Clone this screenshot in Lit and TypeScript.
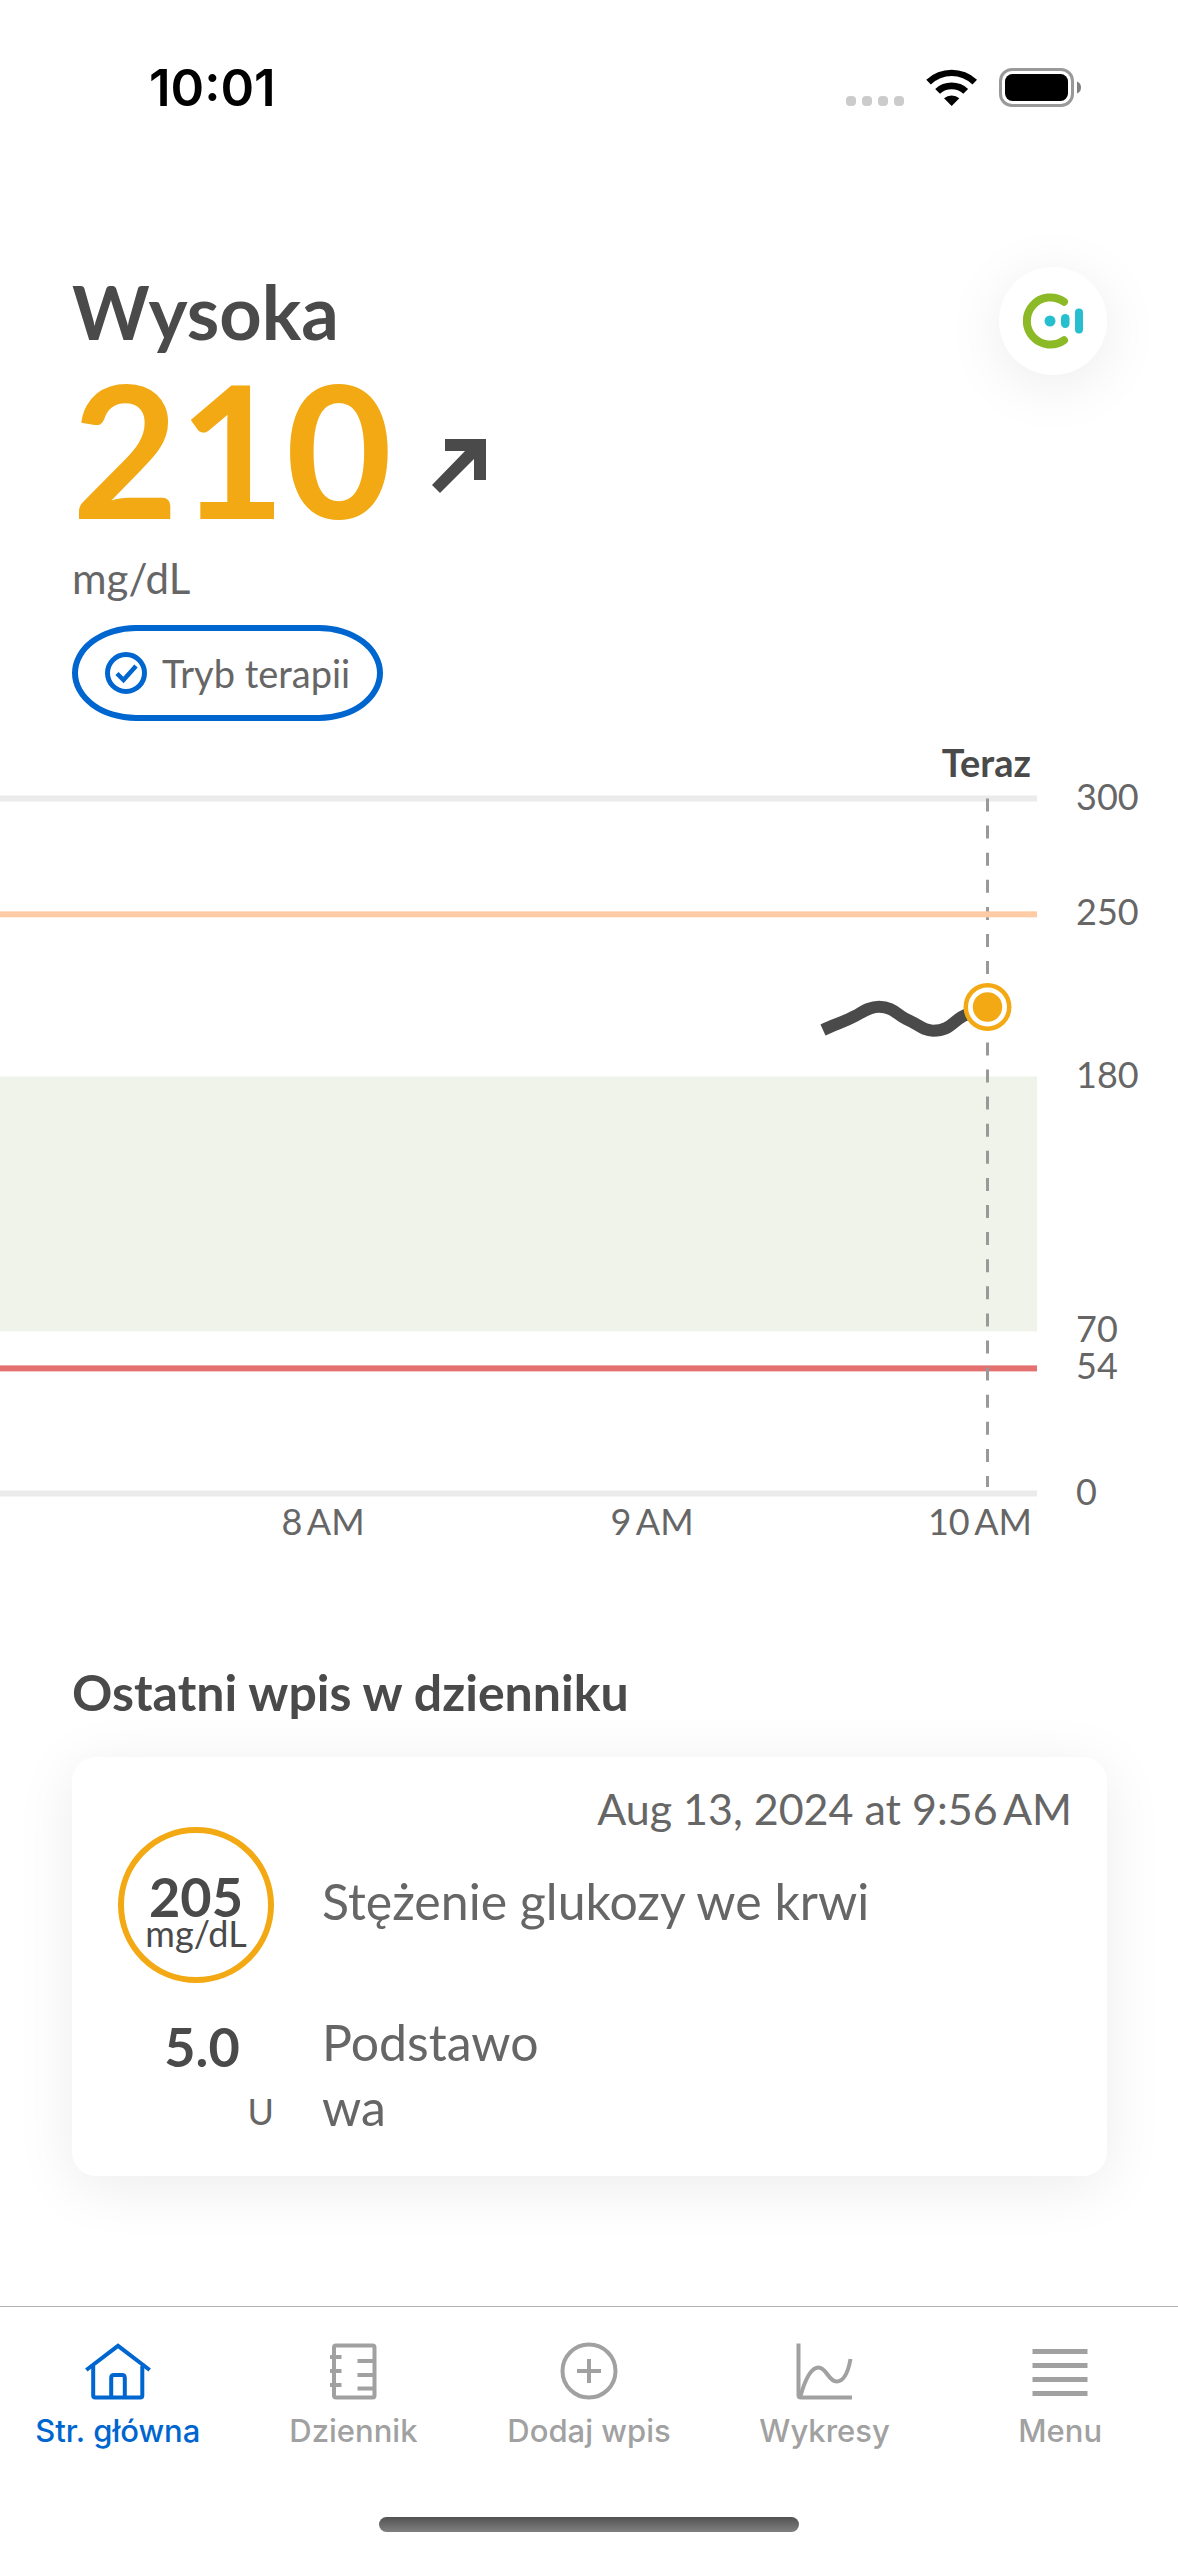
import { LitElement, html, css, svg } from "lit";
import { customElement, property } from "lit/decorators.js";
import { classMap } from "lit/directives/class-map.js";

const tabs = [
  {
    label: "Str. główna",
    active: true,
    icon: svg`<path d="M.3 27 32 2.800 63.700 27" stroke-linejoin="miter"/><path d="M7.200 23V52.500Q7.200 54.500 9.200 54.500H54.300Q56.300 54.500 56.300 52.500V23"/><path d="M25.200 54.500V35Q25.200 32 28 32H36Q38.800 32 38.800 35V54.500"/>`,
  },
  {
    label: "Dziennik",
    active: false,
    icon: svg`<rect x="13" y="2.500" width="40.500" height="52" rx="2"/><path d="M9 14H20.500M9 28H20.500M9 42H20.500M36.500 18H53M36.500 32H53M36.500 45.500H53"/>`,
  },
  {
    label: "Dodaj wpis",
    active: false,
    icon: svg`<circle cx="32" cy="28" r="26.500"/><path d="M20 28H44M32 16V40"/>`,
  },
  {
    label: "Wykresy",
    active: false,
    icon: svg`<path d="M5.500 .5V52Q5.500 54.500 8 54.500H59"/><path d="M7.500 53C12 37 17.500 24.500 25.500 24.500C33.500 24.500 35.500 38.500 43.500 38.500C50 38.500 55 30 57.500 16"/>`,
  },
  {
    label: "Menu",
    active: false,
    icon: svg`<path stroke-width="5" d="M4.500 8.500H59.500M4.500 22.500H59.500M4.500 36.500H59.500M4.500 50.500H59.500"/>`,
  },
];

@customElement("status-bar")
class StatusBar extends LitElement {
  static styles = css`
    :host {
      display: flex;
      align-items: center;
      justify-content: space-between;
      box-sizing: border-box;
      height: 118px;
      padding: 58px 96px 0 149px;
      color: #000;
      font: 600 51px/60px Inter, "Liberation Sans", sans-serif;
    }
    .icons {
      width: 236px;
      height: 40px;
    }
  `;
  render() {
    return html`
      <span>10:01</span>
      <svg class="icons" viewBox="0 0 236 40" aria-hidden="true">
        <g fill="#cbcbcb">
          <rect x="0" y="28" width="10" height="10" rx="4" />
          <rect x="16" y="28" width="10" height="10" rx="4" />
          <rect x="32" y="28" width="10" height="10" rx="4" />
          <rect x="48" y="28" width="10" height="10" rx="4" />
        </g>
        <path d="M80.300 11.700A37 37 0 0 1 131 11.700L126.500 16.400A30 30 0 0 0 84.800 16.400Z" />
        <path d="M89.200 20.900A24 24 0 0 1 122.100 20.900L117.300 25.800A17.500 17.500 0 0 0 94 25.800Z" />
        <path d="M98 30.200A12 12 0 0 1 113.300 30.200L105.700 38Z" />
        <rect x="154.500" y="1.500" width="72" height="36" rx="11.500" fill="none" stroke="#999" stroke-width="3" />
        <rect x="159" y="6" width="63" height="27" rx="7.500" />
        <path d="M231 13.500Q235 15 235 19.500T231 25.500Z" fill="#808080" />
      </svg>
    `;
  }
}

@customElement("glucose-hero")
class GlucoseHero extends LitElement {
  static styles = css`
    :host {
      display: flex;
      align-items: flex-start;
      justify-content: space-between;
      padding: 149px 71px 0 72px;
    }
    .reading {
      display: flex;
      flex-direction: column;
      align-items: flex-start;
    }
    .level {
      margin: 0;
      font-size: 74px;
      line-height: 90px;
      font-weight: 700;
      color: #4a4a4a;
    }
    .row {
      display: flex;
      align-items: center;
      gap: 40px;
    }
    .value {
      font-size: 184px;
      line-height: 182px;
      font-weight: 700;
      color: #f2a913;
    }
    .arrow {
      width: 54px;
      height: 54px;
      margin-top: 36px;
    }
    .unit {
      font-size: 42px;
      line-height: 78px;
    }
    .mode {
      display: flex;
      align-items: center;
      gap: 15px;
      box-sizing: border-box;
      height: 96px;
      margin: 8px 0 0;
      padding: 0 27px;
      border: 6px solid #0066cf;
      border-radius: 64px / 48px;
      background: #fff;
      color: #666;
      font: inherit;
      font-size: 38px;
    }
    .check {
      width: 42px;
      height: 42px;
    }
    .device {
      display: grid;
      place-items: center;
      width: 108px;
      height: 108px;
      padding: 0;
      border: 0;
      border-radius: 50%;
      background: #fff;
      box-shadow: 0 10px 60px rgba(0, 0, 0, 0.08);
    }
    .mark {
      width: 60px;
      height: 56px;
    }
  `;
  render() {
    return html`
      <section class="reading">
        <h1 class="level">Wysoka</h1>
        <div class="row">
          <span class="value">210</span>
          <svg class="arrow" viewBox="0 0 54 54" aria-hidden="true">
            <path d="M13 0H54V41H42V20L8 54L0 46L33 12H13Z" fill="#4a4a4a" />
          </svg>
        </div>
        <span class="unit">mg/dL</span>
        <button class="mode" type="button">
          <svg class="check" viewBox="0 0 42 42" fill="none" stroke="#0066cf" aria-hidden="true">
            <circle cx="21" cy="21" r="18.500" stroke-width="5" />
            <path d="M12 21.500 18.500 28 31 14" stroke-width="4.500" />
          </svg>
          <span>Tryb terapii</span>
        </button>
      </section>
      <button class="device" type="button" aria-label="Sensor">
        <svg class="mark" viewBox="0 0 60 56" aria-hidden="true">
          <path d="M41 8.700A23.600 23.600 0 1 0 41 47.300" fill="none" stroke="#8cb926" stroke-width="8" stroke-linecap="round" />
          <g fill="#27bfd0">
            <circle cx="27" cy="28" r="5.500" />
            <rect x="38" y="21" width="8.500" height="14" rx="4.200" />
            <rect x="52" y="15.500" width="8" height="25" rx="4" />
          </g>
        </svg>
      </button>
    `;
  }
}

@customElement("glucose-chart")
class GlucoseChart extends LitElement {
  static styles = css`
    :host {
      display: block;
    }
    .plot {
      display: block;
      width: 100%;
      height: auto;
    }
    .label {
      font-size: 36px;
      fill: #666;
    }
    .now {
      font-size: 38px;
      font-weight: 700;
      fill: #4a4a4a;
      text-anchor: end;
    }
    .hour {
      text-anchor: middle;
    }
  `;

  private y(level: number) {
    return 772.500 - (level * 695) / 300;
  }

  render() {
    const levels = [300, 250, 180, 70, 54, 0];
    const hours = [
      { x: 323, text: "8\u2009AM" },
      { x: 652, text: "9\u2009AM" },
      { x: 980, text: "10\u2009AM" },
    ];
    const line = (level: number, color: string) =>
      svg`<rect x="0" y=${this.y(level) - 3} width="1037" height="6" fill=${color} />`;
    return html`
      <svg class="plot" viewBox="0 0 1178 840" role="img" aria-label="mg/dL">
        <rect x="0" y=${this.y(180)} width="1037" height=${this.y(70) - this.y(180)} fill="#f0f3e9" />
        ${line(300, "#ebebeb")} ${line(54, "#e57070")} ${line(0, "#ebebeb")}
        <path d="M987.500 77.500V766" stroke="#999" stroke-width="3" stroke-dasharray="13 14.100" />
        ${line(250, "#ffcba4")}
        <path
          d="M823 309C836 303 846 300 856 294.500C864 290 870 285.800 879 285.800C893 285.800 896 293 906 298C918 303 923 309.700 933 309.700C948 309.700 951 303 960 297C967 292 978 290 987 286"
          fill="none" stroke="#4a4a4a" stroke-width="12"
        />
        <circle cx="987.500" cy="286" r="24" fill="#f2a913" />
        <circle cx="987.500" cy="286" r="19.500" fill="#fff" />
        <circle cx="987.500" cy="286" r="14.700" fill="#f2a913" />
        <text class="now" x="1031" y="56">Teraz</text>
        ${levels.map((l) => svg`<text class="label" x="1076" y=${this.y(l) + 11}>${l}</text>`)}
        ${hours.map((h) => svg`<text class="label hour" x=${h.x} y="814">${h.text}</text>`)}
      </svg>
    `;
  }
}

@customElement("last-entry")
class LastEntry extends LitElement {
  static styles = css`
    :host {
      display: flex;
      flex-direction: column;
      gap: 35px;
      padding: 101px 71px 120px 72px;
    }
    .title {
      margin: 0;
      font-size: 50px;
      line-height: 60px;
      font-weight: 700;
      color: #4a4a4a;
    }
    .card {
      display: grid;
      grid-template-columns: 156px 1fr;
      column-gap: 48px;
      padding: 34px 35px 36px 46px;
      border-radius: 24px;
      background: #fff;
      box-shadow: 0 10px 60px rgba(0, 0, 0, 0.08);
    }
    .date {
      grid-column: 1 / -1;
      text-align: right;
      font-size: 43px;
      line-height: 36px;
    }
    .ring {
      display: flex;
      flex-direction: column;
      align-items: center;
      justify-content: center;
      box-sizing: border-box;
      height: 156px;
      padding-top: 20px;
      border: 6px solid #f2a913;
      border-radius: 50%;
      color: #4a4a4a;
    }
    .number {
      font-size: 54px;
      line-height: 36px;
      font-weight: 700;
      color: #4a4a4a;
    }
    .small {
      font-size: 36px;
      line-height: 36px;
    }
    .name {
      font-size: 50px;
      line-height: 65px;
    }
    .glucose {
      align-self: center;
      padding-bottom: 8px;
    }
    .dose {
      display: flex;
      flex-direction: column;
      padding-top: 27px;
    }
    .amount {
      padding-left: 12px;
      line-height: 74px;
      text-align: center;
    }
    .units {
      line-height: 54px;
      text-align: right;
    }
    .kind {
      max-width: 235px;
      padding-top: 27px;
      word-break: break-all;
    }
  `;
  render() {
    return html`
      <h2 class="title">Ostatni wpis w dzienniku</h2>
      <article class="card">
        <time class="date">Aug 13, 2024 at 9:56\u2009AM</time>
        <div class="ring">
          <span class="number">205</span>
          <span class="small">mg/dL</span>
        </div>
        <span class="name glucose">Stężenie glukozy we krwi</span>
        <div class="dose">
          <span class="number amount">5.0</span>
          <span class="small units">U</span>
        </div>
        <span class="name kind">Podstawowa</span>
      </article>
    `;
  }
}

@customElement("tab-bar")
class TabBar extends LitElement {
  @property({ attribute: false }) items = tabs;

  static styles = css`
    :host {
      display: block;
      border-top: 1px solid #b2b2b2;
      background: #fff;
      font-family: Inter, "Liberation Sans", sans-serif;
    }
    .tabs {
      display: grid;
      grid-template-columns: repeat(5, 1fr);
      padding-top: 36px;
    }
    .tab {
      display: flex;
      flex-direction: column;
      align-items: center;
      gap: 14px;
      color: #a1a1a1;
      font-size: 31px;
      line-height: 36px;
      font-weight: 500;
      text-decoration: none;
      white-space: nowrap;
    }
    .active {
      color: #0066cf;
    }
    .icon {
      width: 64px;
      height: 56px;
      overflow: visible;
      fill: none;
      stroke: currentColor;
      stroke-width: 4px;
    }
    .icon path[stroke-width] {
      stroke-width: 5px;
    }
    .indicator {
      width: 36%;
      max-width: 420px;
      height: 15px;
      margin: 68px auto 24px;
      border-radius: 8px;
      background: linear-gradient(#525252, #808080);
    }
  `;
  render() {
    return html`
      <nav class="tabs">
        ${this.items.map(
          (t) => html`
            <a class=${classMap({ tab: true, active: t.active })} href="#">
              <svg class="icon" viewBox="0 0 64 56" aria-hidden="true">${t.icon}</svg>
              <span>${t.label}</span>
            </a>
          `,
        )}
      </nav>
      <div class="indicator"></div>
    `;
  }
}

@customElement("app-root")
class AppRoot extends LitElement {
  static styles = css`
    :host {
      display: flex;
      flex-direction: column;
      min-height: 100vh;
      background: #fff;
      color: #666;
      font-family: Lato, "Open Sans", sans-serif;
    }
    .content {
      flex: 1;
    }
  `;
  render() {
    return html`
      <status-bar></status-bar>
      <main class="content">
        <glucose-hero></glucose-hero>
        <glucose-chart></glucose-chart>
        <last-entry></last-entry>
      </main>
      <tab-bar></tab-bar>
    `;
  }
}
